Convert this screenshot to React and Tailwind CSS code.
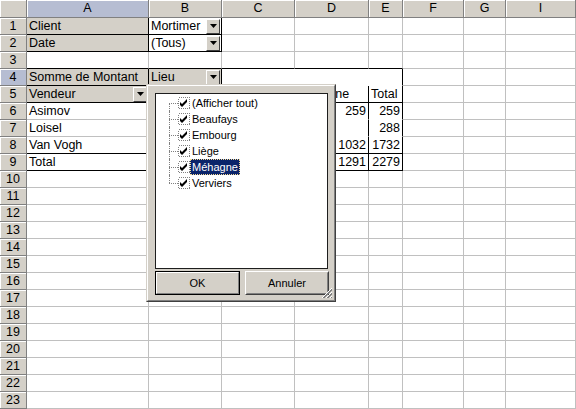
import React from 'react';

const COLS = ['A', 'B', 'C', 'D', 'E', 'F', 'G', 'I'];
const ROWS = Array.from({ length: 23 }, (_, i) => i + 1);

const cells = {
  A1: { text: 'Client', field: true },
  B1: { text: 'Mortimer', drop: true },
  A2: { text: 'Date', field: true },
  B2: { text: '(Tous)', drop: true },
  A4: { text: 'Somme de Montant', field: true },
  B4: { text: 'Lieu', field: true, drop: true },
  A5: { text: 'Vendeur', field: true, drop: true },
  D5: { text: 'Méhagne' },
  E5: { text: 'Total' },
  A6: { text: 'Asimov' },
  D6: { text: '259', num: true },
  E6: { text: '259', num: true },
  A7: { text: 'Loisel' },
  E7: { text: '288', num: true },
  A8: { text: 'Van Vogh' },
  D8: { text: '1032', num: true },
  E8: { text: '1732', num: true },
  A9: { text: 'Total' },
  D9: { text: '1291', num: true },
  E9: { text: '2279', num: true },
};

const inPivot = (c, r) => r >= 4 && r <= 9 && 'ABCDE'.includes(c);

const rightKind = (c, r) => {
  if ((r === 1 || r === 2) && (c === 'A' || c === 'B')) return 'black';
  if (inPivot(c, r)) {
    if (c === 'A' || c === 'E') return 'black';
    if (r === 4) return c === 'B' ? 'black' : 'none';
    return 'black';
  }
  return 'grid';
};

const bottomKind = (c, r) => {
  if ((r === 1 || r === 2) && (c === 'A' || c === 'B')) return 'black';
  if (r === 3 && 'ABCDE'.includes(c)) return 'black';
  if (inPivot(c, r)) {
    if (r === 4) return c === 'A' || c === 'B' ? 'black' : 'none';
    if (r === 5 || r === 8 || r === 9) return 'black';
    return c === 'A' ? 'grid' : 'none';
  }
  return 'grid';
};

const rightCls = { black: 'border-r-black', grid: 'border-r-[#c0c0c0]', none: 'border-r-white' };
const bottomCls = { black: 'border-b-black', grid: 'border-b-[#c0c0c0]', none: 'border-b-white' };

const DropButton = () => (
  <div className="mr-px flex h-[15px] w-[14px] shrink-0 items-center justify-center border border-t-white border-l-white border-r-[#404040] border-b-[#404040] bg-[#d4d0c8]">
    <svg width="7" height="4" viewBox="0 0 7 4">
      <polygon points="0,0 7,0 3.5,4" fill="#000" />
    </svg>
  </div>
);

const Cell = ({ c, r }) => {
  const key = `${c}${r}`;
  const data = cells[key];
  const bg = data?.field ? 'bg-[#d4d0c8]' : 'bg-white';
  return (
    <div
      className={`flex items-center justify-between overflow-hidden whitespace-nowrap border-r border-b ${rightCls[rightKind(c, r)]} ${bottomCls[bottomKind(c, r)]} ${bg}`}
    >
      {data && (
        <span className={`px-[2px] ${data.num ? 'ml-auto' : ''}`}>{data.text}</span>
      )}
      {data?.drop && <DropButton />}
    </div>
  );
};

const items = ['(Afficher tout)', 'Beaufays', 'Embourg', 'Liège', 'Méhagne', 'Verviers'];

// tree-view checkbox, classic 3px thick tick
const CheckBox = () => (
  <svg width="12" height="12" viewBox="0 0 12 12" className="shrink-0" shapeRendering="crispEdges">
    <rect x="0.5" y="0.5" width="11" height="11" fill="#fff" stroke="#808080" strokeDasharray="1 1" />
    <path d="M2 5 L4 7 L9 2 L9 5 L4 10 L2 8 Z" fill="#000" shapeRendering="auto" />
  </svg>
);

const TreeItem = ({ label, index, last }) => {
  const selected = label === 'Méhagne';
  return (
    <div className="flex h-[16px] items-center">
      <div className="w-[13px] shrink-0" />
      <div className="relative h-full w-[9px] shrink-0">
        {index === 0 && (
          <span className="absolute left-0 top-1/2 bottom-0 border-l border-dotted border-[#808080]" />
        )}
        {last && (
          <span className="absolute left-0 top-0 h-1/2 border-l border-dotted border-[#808080]" />
        )}
        {index > 0 && !last && (
          <span className="absolute left-0 top-0 bottom-0 border-l border-dotted border-[#808080]" />
        )}
        <span className="absolute left-0 top-1/2 w-full border-t border-dotted border-[#808080]" />
      </div>
      <CheckBox />
      <span
        className={`flex h-[16px] items-center px-[2px] ${
          selected ? 'bg-[#0a246a] text-white outline-1 outline-dotted outline-[#f5db95] -outline-offset-1' : 'text-black'
        }`}
      >
        {label}
      </span>
    </div>
  );
};

const Button = ({ children, primary, width }) => (
  <div
    className={`${width} h-[24px] border ${
      primary ? 'border-black' : 'border-t-white border-l-white border-r-[#404040] border-b-[#404040]'
    }`}
  >
    <div
      className={`flex h-full w-full items-center justify-center border ${
        primary
          ? 'border-t-white border-l-white border-r-[#808080] border-b-[#808080]'
          : 'border-t-[#d4d0c8] border-l-[#d4d0c8] border-r-[#808080] border-b-[#808080]'
      }`}
    >
      {children}
    </div>
  </div>
);

const FilterPopup = () => (
  <div className="absolute left-[146px] top-[84px] h-[218px] w-[190px] border border-t-[#d4d0c8] border-l-[#d4d0c8] border-r-[#404040] border-b-[#404040] bg-[#d4d0c8] text-[11px]">
    <div className="flex h-full w-full flex-col border border-t-white border-l-white border-r-[#808080] border-b-[#808080] pt-[7px] pl-[7px]">
      <div className="h-[176px] w-[173px] border border-[#1e1e1e] bg-white pt-px">
        {items.map((label, i) => (
          <TreeItem key={label} label={label} index={i} last={i === items.length - 1} />
        ))}
      </div>
      <div className="mt-[2px] flex gap-[5px] font-normal">
        <Button primary width="w-[85px]">OK</Button>
        <Button width="w-[84px]">Annuler</Button>
      </div>
    </div>
    <svg width="12" height="12" viewBox="0 0 12 12" className="absolute right-[2px] bottom-[2px]">
      <line x1="11" y1="1" x2="1" y2="11" stroke="#fff" />
      <line x1="11" y1="2" x2="2" y2="11" stroke="#808080" />
      <line x1="11" y1="3" x2="3" y2="11" stroke="#808080" />
      <line x1="11" y1="5" x2="5" y2="11" stroke="#fff" />
      <line x1="11" y1="6" x2="6" y2="11" stroke="#808080" />
      <line x1="11" y1="7" x2="7" y2="11" stroke="#808080" />
      <line x1="11" y1="9" x2="9" y2="11" stroke="#fff" />
      <line x1="11" y1="10" x2="10" y2="11" stroke="#808080" />
    </svg>
  </div>
);

export default function App() {
  return (
    <div className="relative h-[409px] w-[576px] overflow-hidden bg-white font-['Liberation_Sans',Arial,sans-serif] text-[12.5px] text-black">
      <div className="grid grid-cols-[27px_122px_73px_73px_74px_34px_61px_42px_70px] grid-rows-[18px_repeat(23,17px)]">
        <div className="border-r border-b border-r-[#808080] border-b-[#808080] bg-[#d4d0c8] shadow-[inset_1px_1px_0_#fff]" />
        {COLS.map((c) => (
          <div
            key={c}
            className={`flex items-center justify-center border-r border-b border-r-[#808080] border-b-[#808080] shadow-[inset_1px_1px_0_#fff] ${
              c === 'A' ? 'bg-[#b6bdd2]' : 'bg-[#d4d0c8]'
            }`}
          >
            {c}
          </div>
        ))}
        {ROWS.map((r) => (
          <React.Fragment key={r}>
            <div
              className={`flex items-center justify-center border-r border-b border-r-[#808080] border-b-[#808080] shadow-[inset_1px_1px_0_#fff] ${
                r === 4 ? 'bg-[#b6bdd2]' : 'bg-[#d4d0c8]'
              }`}
            >
              {r}
            </div>
            {COLS.map((c) => (
              <Cell key={c} c={c} r={r} />
            ))}
          </React.Fragment>
        ))}
      </div>
      <FilterPopup />
    </div>
  );
}
